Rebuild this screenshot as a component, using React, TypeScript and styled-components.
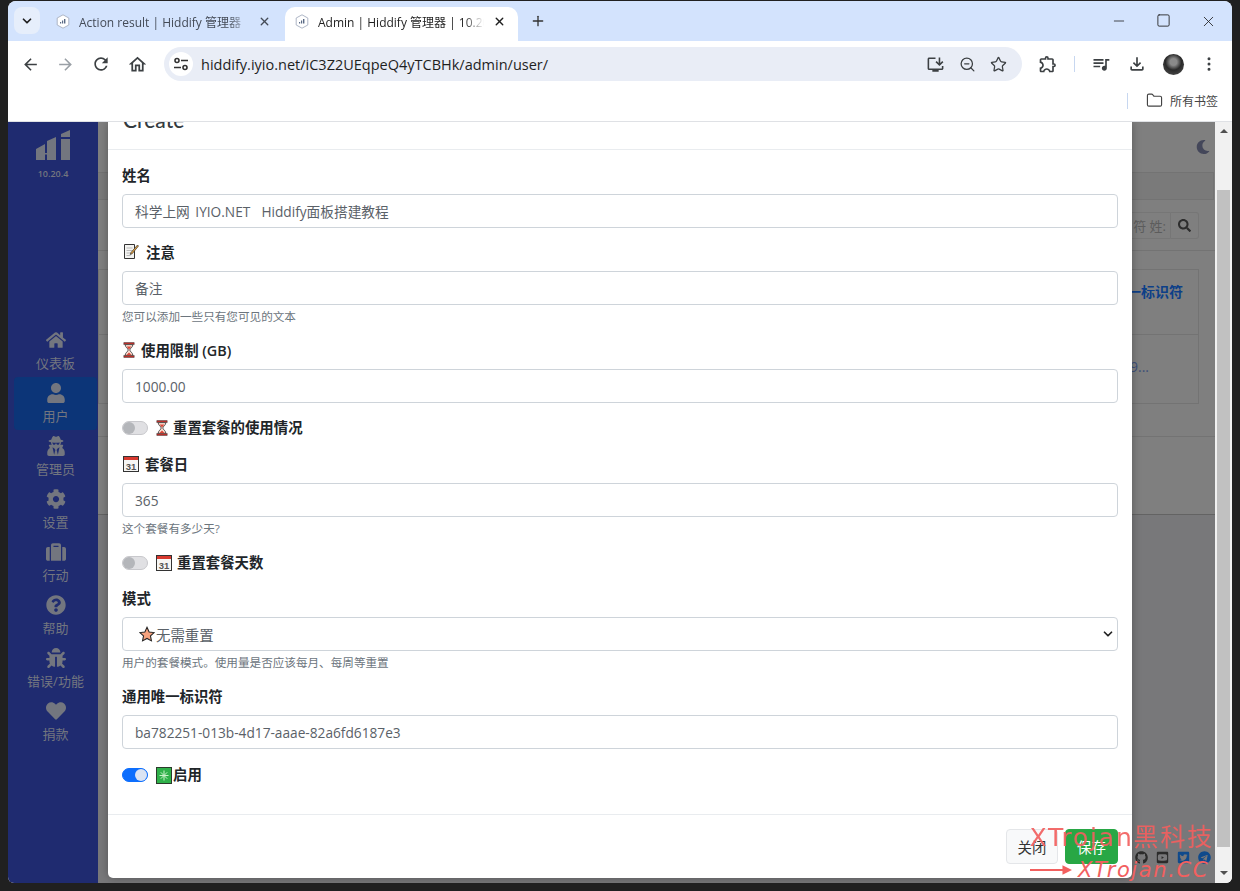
import { createGlobalStyle, styled } from 'styled-components';
import {
  FaBug,
  FaCog,
  FaGithub,
  FaHeart,
  FaHome,
  FaMoon,
  FaQuestionCircle,
  FaSearch,
  FaSuitcase,
  FaTelegram,
  FaTwitterSquare,
  FaUser,
  FaUserSecret,
  FaYoutubeSquare,
} from 'react-icons/fa';
import {
  MdArrowBack,
  MdArrowForward,
  MdOutlineExtension,
  MdOutlineFileDownload,
  MdOutlineHome,
  MdOutlineInstallDesktop,
  MdOutlineQueueMusic,
  MdRefresh,
} from 'react-icons/md';
import { ChevronDown, EllipsisVertical, Folder, Minus, Plus, Square, Star, X, ZoomOut } from 'lucide-react';

const FONT = `"Open Sans", "Noto Sans CJK SC", sans-serif`;

const GlobalStyle = createGlobalStyle`
  html, body {
    margin: 0;
    height: 100%;
    background: #202020;
    font-family: ${FONT};
    overflow: hidden;
  }
  * { box-sizing: border-box; }
`;

const Frame = styled.div`
  height: 891px;
  padding: 1px 8px 8px;
`;

const Window = styled.div`
  position: relative;
  height: 100%;
  display: flex;
  flex-direction: column;
  background: #fff;
  border-radius: 8px 8px 6px 6px;
  overflow: hidden;
`;

const TabStrip = styled.div`
  flex: none;
  height: 40px;
  display: flex;
  align-items: flex-end;
  padding-left: 6px;
  background: #d3e3fd;
`;

const TabMenu = styled.div`
  align-self: flex-start;
  width: 26px;
  height: 27px;
  margin: 6px 6px 0 0;
  display: flex;
  align-items: center;
  justify-content: center;
  background: #e6eefb;
  border-radius: 8px;
  color: #1f1f1f;
`;

const Tab = styled.div<{ $active?: boolean }>`
  width: ${({ $active }) => ($active ? '233px' : '237px')};
  height: 34px;
  margin-right: ${({ $active }) => ($active ? 0 : '2px')};
  display: flex;
  align-items: center;
  gap: 9px;
  padding: 0 12px 5px 10px;
  font-size: 12px;
  white-space: nowrap;
  color: ${({ $active }) => ($active ? '#1f1f1f' : '#444b57')};
  background: ${({ $active }) => ($active ? '#fff' : 'transparent')};
  border-radius: 10px 10px 0 0;
`;

const TabTitle = styled.span`
  flex: 1;
  overflow: hidden;
  mask-image: linear-gradient(to right, #000 88%, transparent);
`;

const NewTab = styled.div`
  align-self: center;
  margin: 0 0 0 12px;
  display: flex;
  color: #333;
`;

const WindowButtons = styled.div`
  margin-left: auto;
  align-self: center;
  display: flex;
  gap: 29px;
  padding-right: 15px;
  color: #222;
`;

const Toolbar = styled.div`
  flex: none;
  height: 46px;
  display: flex;
  align-items: center;
  padding: 0 12px 0 13px;
  color: #3c4043;
`;

const NavButtons = styled.div`
  display: flex;
  align-items: center;
  gap: 16px;
  margin-right: 16px;
`;

const Omnibox = styled.div`
  flex: none;
  width: 858px;
  height: 34px;
  display: flex;
  align-items: center;
  padding: 0 15px 0 5px;
  background: #e9edf6;
  border-radius: 17px;
`;

const SiteBadge = styled.div`
  width: 24px;
  height: 24px;
  display: flex;
  align-items: center;
  justify-content: center;
  margin-right: 8px;
  background: #fff;
  border-radius: 50%;
`;

const Url = styled.span`
  flex: 1;
  font-size: 14.5px;
  color: #1f1f1f;
`;

const OmniIcons = styled.div`
  display: flex;
  align-items: center;
  gap: 14px;
`;

const ToolIcons = styled.div`
  flex: none;
  display: flex;
  align-items: center;
  gap: 16px;
  margin-left: 16px;
`;

const Divider = styled.div`
  width: 1px;
  height: 16px;
  background: #c7d7f0;
`;

const Avatar = styled.div`
  width: 21px;
  height: 21px;
  border-radius: 50%;
  background: radial-gradient(circle at 50% 38%, #8a8a8a 0 20%, #2a2a2a 48%, #555 100%);
`;

const Bookmarks = styled.div`
  flex: none;
  height: 35px;
  display: flex;
  align-items: center;
  justify-content: flex-end;
  gap: 7px;
  padding: 0 14px 7px 0;
  font-size: 12px;
  color: #444;
  border-bottom: 1px solid #dfe1e5;
`;

const BookmarkDivider = styled(Divider)`
  margin-right: 11px;
`;

const Page = styled.div`
  position: relative;
  flex: 1;
  display: flex;
  min-height: 0;
  overflow: hidden;
`;

const Sidebar = styled.aside`
  flex: none;
  width: 90px;
  display: flex;
  flex-direction: column;
  align-items: center;
  padding-top: 8px;
  background: #1f2b70;
  color: #73767f;
`;

const Version = styled.div`
  margin-top: 6px;
  margin-bottom: 144px;
  font-size: 9px;
  font-weight: 600;
`;

const NavList = styled.nav`
  width: 100%;
  padding: 0 1px 0 6px;
`;

const NavItem = styled.div<{ $active?: boolean }>`
  height: 53px;
  display: flex;
  flex-direction: column;
  align-items: center;
  justify-content: center;
  gap: 4px;
  font-size: 13px;
  line-height: 18px;
  border-radius: 4px;
  background: ${({ $active }) => ($active ? '#0c3578' : 'transparent')};
`;

const Main = styled.main`
  flex: 1;
  display: flex;
  flex-direction: column;
  background: #7f7f7f;
  color: #333;
`;

const TopBar = styled.div`
  flex: none;
  height: 50px;
  display: flex;
  align-items: center;
  justify-content: flex-end;
  padding-right: 5px;
  color: #44475a;
`;

const Crumb = styled.div`
  flex: none;
  height: 28px;
  margin-right: 1px;
  background: #7a7a7a;
  border: 1px solid #737373;
  border-left: 0;
`;

const SearchRow = styled.div`
  flex: none;
  height: 51px;
  display: flex;
  align-items: center;
  justify-content: flex-end;
  padding: 0 16px 0 0;
  border-bottom: 1px solid #737373;
`;

const SearchField = styled.div`
  width: 70px;
  height: 27px;
  padding: 0 4px;
  text-align: right;
  font-size: 13px;
  line-height: 27px;
  color: #5c5c5c;
  border: 1px solid #767676;
  border-radius: 3px 0 0 3px;
`;

const SearchButton = styled.div`
  width: 28px;
  height: 27px;
  display: flex;
  align-items: center;
  justify-content: center;
  color: #2d2d2d;
  border: 1px solid #767676;
  border-left: 0;
  border-radius: 0 3px 3px 0;
`;

const TableArea = styled.div`
  flex: none;
  height: 186px;
  padding: 18px 16px 0 0;
  border-bottom: 1px solid #737373;
`;

const TableCell = styled.div<{ $tall?: boolean }>`
  height: ${({ $tall }) => ($tall ? '69px' : '66px')};
  padding: ${({ $tall }) => ($tall ? '22px' : '11px')} 15px 0 0;
  text-align: right;
  font-size: 14px;
  font-weight: ${({ $tall }) => ($tall ? 400 : 600)};
  color: ${({ $tall }) => ($tall ? '#3d4f78' : '#0d3f88')};
  border: 1px solid #737373;
  border-top-width: ${({ $tall }) => ($tall ? 0 : '1px')};
`;

const TallCellText = styled.span`
  display: block;
  margin-right: 34px;
`;

const Band = styled.div`
  flex: none;
  height: 78px;
  border-bottom: 1px solid #636363;
`;

const LowerArea = styled.div`
  flex: 1;
  display: flex;
  align-items: flex-end;
  justify-content: flex-end;
  gap: 8px;
  padding: 0 4px 19px 0;
  background: #78787a;
  color: #2b2b2b;
`;

const BlueIcon = styled.span`
  display: flex;
  color: #0f4a8c;
`;

const ScrollBar = styled.div`
  flex: none;
  width: 17px;
  display: flex;
  flex-direction: column;
  align-items: center;
  background: #f1f1f1;
`;

const ScrollArrow = styled.div<{ $down?: boolean }>`
  flex: none;
  width: 0;
  height: 0;
  margin: ${({ $down }) => ($down ? 'auto 0 8px' : '7px 0 0')};
  border-left: 4px solid transparent;
  border-right: 4px solid transparent;
  border-bottom: ${({ $down }) => ($down ? '0' : '4px solid #505050')};
  border-top: ${({ $down }) => ($down ? '4px solid #505050' : '0')};
`;

const ScrollThumb = styled.div`
  flex: none;
  width: 13px;
  height: 657px;
  margin-top: 57px;
  background: #c1c1c1;
`;

const Modal = styled.section`
  position: absolute;
  top: 0;
  bottom: 5px;
  left: 100px;
  width: 1024px;
  display: flex;
  flex-direction: column;
  background: #fff;
  border-radius: 0 0 5px 5px;
  box-shadow: 0 0 10px rgba(0, 0, 0, 0.3);
`;

const ModalHeader = styled.header`
  flex: none;
  height: 28px;
  display: flex;
  align-items: flex-end;
  padding: 0 15px 17px;
  overflow: hidden;
  border-bottom: 1px solid #e9ecef;
`;

const ModalTitle = styled.h5`
  margin: 0;
  font-family: Lato, sans-serif;
  font-size: 21px;
  font-weight: 500;
  line-height: 24px;
  color: #343a40;
`;

const ModalBody = styled.form`
  flex: 1;
  padding: 16px 14px 0;
`;

const FieldLabel = styled.label`
  height: 20px;
  display: flex;
  align-items: center;
  gap: 6px;
  margin-bottom: 8px;
  padding-bottom: 3px;
  font-size: 14.4px;
  font-weight: 600;
  color: #212529;

  svg {
    margin-left: 1px;
  }
`;

const Input = styled.div`
  height: 34px;
  display: flex;
  align-items: center;
  padding: 0 12px;
  font-size: 13.7px;
  word-spacing: 2px;
  color: #5a6168;
  background: #fff;
  border: 1px solid #ced4da;
  border-radius: 4px;
`;

const SelectBox = styled(Input)`
  padding-right: 2px;
  font-size: 14.4px;
`;

const SelectIconWrap = styled.span`
  display: flex;
  margin: 0 1px 0 4px;
`;

const SelectText = styled.span`
  flex: 1;
`;

const Hint = styled.div`
  margin-top: 4px;
  height: 16px;
  font-size: 11.6px;
  line-height: 16px;
  color: #6c757d;
`;

const Field = styled.div<{ $gap: number }>`
  margin-bottom: ${({ $gap }) => $gap}px;
`;

const SwitchRow = styled.div<{ $gap: number }>`
  height: 20px;
  display: flex;
  align-items: center;
  gap: 8px;
  margin-bottom: ${({ $gap }) => $gap}px;
  font-size: 14.4px;
  font-weight: 600;
  color: #212529;
`;

const SwitchLabel = styled.span<{ $gap?: number }>`
  display: flex;
  align-items: center;
  gap: ${({ $gap }) => $gap ?? 5}px;
  margin-bottom: 3px;

  svg {
    margin-top: 3px;
  }
`;

const Switch = styled.span<{ $on?: boolean }>`
  position: relative;
  flex: none;
  width: 26px;
  height: 14px;
  border-radius: 7px;
  background: ${({ $on }) => ($on ? '#0d6efd' : '#e0e0e3')};
  border: 1px solid ${({ $on }) => ($on ? '#0d6efd' : '#c8c8cc')};

  &::after {
    content: '';
    position: absolute;
    top: 0;
    left: ${({ $on }) => ($on ? '12px' : '0')};
    width: 12px;
    height: 12px;
    border-radius: 50%;
    background: ${({ $on }) => ($on ? '#dbe4f3' : '#b4b6ba')};
  }
`;

const ModalFooter = styled.footer`
  flex: none;
  height: 64px;
  display: flex;
  align-items: flex-start;
  justify-content: flex-end;
  gap: 7px;
  padding: 14px 14px 0;
  border-top: 1px solid #e9ecef;
`;

const Button = styled.button<{ $primary?: boolean }>`
  height: 35px;
  width: ${({ $primary }) => ($primary ? '53px' : '52px')};
  padding: 0;
  font-family: inherit;
  font-size: 14.4px;
  color: ${({ $primary }) => ($primary ? '#fff' : '#333')};
  background: ${({ $primary }) => ($primary ? '#28a745' : '#f8f9fa')};
  border: 1px solid ${({ $primary }) => ($primary ? '#28a745' : '#e4e6e9')};
  border-radius: 4px;
`;

const Watermark = styled.div`
  position: absolute;
  right: 18px;
  bottom: 0;
  display: flex;
  flex-direction: column;
  align-items: flex-end;
  font-family: 'DejaVu Sans', 'Noto Sans CJK SC', sans-serif;
  color: #f2605f;
  pointer-events: none;
`;

const WatermarkTop = styled.div`
  margin-bottom: 4px;
  font-size: 25px;
  line-height: 30px;
  letter-spacing: 1.8px;
  opacity: 0.92;
`;

const WatermarkBottom = styled.div`
  display: flex;
  align-items: center;
  gap: 6px;
  padding-right: 5px;
  font-size: 21px;
  line-height: 26px;
  font-style: italic;
  letter-spacing: 1.6px;
`;

const LogoBars = () => (
  <svg width='36' height='31' viewBox='0 0 36 31' fill='currentColor'>
    <path d='M1 19l9-5v16H1zM12 11l9-4v23h-9zM26 4l9-4v7h-9zM26 9h9v21h-9z' />
    <path d='M10 23h2v1.500h-2z' />
  </svg>
);

const HiddifyTabIcon = () => (
  <svg width='14' height='15' viewBox='0 0 14 15'>
    <path d='M7 .8l5.800 3.200v7L7 14.200 1.200 11V4z' fill='#fff' stroke='#aeb6c6' strokeWidth='1' />
    <path d='M4 9.500h1.200V8H4zM6 9.500h1.200V6.500H6zM8 9.500h1.400V5H8z' fill='#5a6a85' />
  </svg>
);

const TuneIcon = () => (
  <svg width='16' height='14' viewBox='0 0 16 14' fill='none' stroke='#333' strokeWidth='1.600'>
    <circle cx='4' cy='3.500' r='2' />
    <path d='M8 3.500h7M1 10.500h7' />
    <circle cx='12' cy='10.500' r='2' />
  </svg>
);

const MemoIcon = () => (
  <svg width='17' height='17' viewBox='0 0 17 17'>
    <path d='M1.500 1.500h10v14h-10z' fill='#f4f4f2' stroke='#333' strokeWidth='1' />
    <path d='M3.500 5h6M3.500 7.500h6M3.500 10h5M3.500 12.500h4' stroke='#aaa' strokeWidth='0.800' />
    <path d='M14.500 2L8 9.500l-.8 2 2-.8L15.500 3z' fill='#e8a33d' stroke='#333' strokeWidth='0.700' />
  </svg>
);

const HourglassIcon = () => (
  <svg width='12' height='16' viewBox='0 0 12 16'>
    <path d='M.8 .6h10.400v2H.8zM.8 13.400h10.400v2H.8z' fill='#c22f2a' stroke='#333' strokeWidth='0.500' />
    <path
      d='M2.200 2.600h7.600c0 3-3 3.800-3 5.400s3 2.400 3 5.400H2.200c0-3 3-3.800 3-5.400s-3-2.400-3-5.400z'
      fill='#fbdcd0'
      stroke='#333'
      strokeWidth='0.800'
    />
    <path d='M3.600 4.500h4.800L6 7.500zM3.200 13.300L6 10.500l2.800 2.800z' fill='#d9483a' />
  </svg>
);

const CalendarIcon = () => (
  <svg width='16' height='16' viewBox='0 0 16 16'>
    <rect x='.5' y='.5' width='15' height='15' fill='#f6f6f4' stroke='#333' />
    <rect x='1' y='1' width='14' height='3' fill='#d8392f' />
    <text x='8' y='13.500' textAnchor='middle' fontSize='9.500' fontFamily='"Liberation Sans", sans-serif' fill='#555'>
      31
    </text>
  </svg>
);

const StarIcon = () => (
  <svg width='16' height='16' viewBox='0 0 18 17'>
    <path
      d='M9 1l2.400 5.200 5.600.7-4.100 3.800 1.100 5.500L9 13.500 4 16.200l1.100-5.500L1 6.900l5.600-.7z'
      fill='#f6a27e'
      stroke='#222'
      strokeWidth='1.200'
    />
  </svg>
);

const SparkleIcon = () => (
  <svg width='16' height='17' viewBox='0 0 16 17'>
    <rect x='.5' y='.5' width='15' height='16' fill='#2fb14a' stroke='#2b3a2b' />
    <path d='M8 3.500v10M3.500 8.500h9M4.800 5.300l6.400 6.400M11.200 5.300l-6.400 6.400' stroke='#c9f2c9' strokeWidth='1' />
  </svg>
);

const NAV_ITEMS = [
  { label: '仪表板', Icon: FaHome },
  { label: '用户', Icon: FaUser, active: true },
  { label: '管理员', Icon: FaUserSecret },
  { label: '设置', Icon: FaCog },
  { label: '行动', Icon: FaSuitcase },
  { label: '帮助', Icon: FaQuestionCircle },
  { label: '错误/功能', Icon: FaBug },
  { label: '捐款', Icon: FaHeart },
];

const App = () => (
  <>
    <GlobalStyle />
    <Frame>
      <Window>
        <TabStrip>
          <TabMenu>
            <ChevronDown size={14} strokeWidth={3} />
          </TabMenu>
          <Tab>
            <HiddifyTabIcon />
            <TabTitle>Action result | Hiddify 管理器</TabTitle>
            <X size={13} strokeWidth={2.5} />
          </Tab>
          <Tab $active>
            <HiddifyTabIcon />
            <TabTitle>Admin | Hiddify 管理器 | 10.20</TabTitle>
            <X size={13} strokeWidth={2.5} />
          </Tab>
          <NewTab>
            <Plus size={16} strokeWidth={2} />
          </NewTab>
          <WindowButtons>
            <Minus size={16} strokeWidth={1.2} />
            <Square size={15} strokeWidth={1.4} />
            <X size={17} strokeWidth={1.2} />
          </WindowButtons>
        </TabStrip>
        <Toolbar>
          <NavButtons>
            <MdArrowBack size={19} />
            <MdArrowForward size={19} color='#9aa0a6' />
            <MdRefresh size={20} />
            <MdOutlineHome size={21} />
          </NavButtons>
          <Omnibox>
            <SiteBadge>
              <TuneIcon />
            </SiteBadge>
            <Url>hiddify.iyio.net/iC3Z2UEqpeQ4yTCBHk/admin/user/</Url>
            <OmniIcons>
              <MdOutlineInstallDesktop size={19} />
              <ZoomOut size={17} strokeWidth={1.8} />
              <Star size={17} strokeWidth={1.8} />
            </OmniIcons>
          </Omnibox>
          <ToolIcons>
            <MdOutlineExtension size={20} />
            <Divider />
            <MdOutlineQueueMusic size={20} />
            <MdOutlineFileDownload size={20} />
            <Avatar />
            <EllipsisVertical size={18} strokeWidth={2} />
          </ToolIcons>
        </Toolbar>
        <Bookmarks>
          <BookmarkDivider />
          <Folder size={17} strokeWidth={1.6} />
          所有书签
        </Bookmarks>
        <Page>
          <Sidebar>
            <LogoBars />
            <Version>10.20.4</Version>
            <NavList>
              {NAV_ITEMS.map(({ label, Icon, active }) => (
                <NavItem key={label} $active={active}>
                  <Icon size={20} />
                  {label}
                </NavItem>
              ))}
            </NavList>
          </Sidebar>
          <Main>
            <TopBar>
              <FaMoon size={14} />
            </TopBar>
            <Crumb />
            <SearchRow>
              <SearchField>符 姓:</SearchField>
              <SearchButton>
                <FaSearch size={13} />
              </SearchButton>
            </SearchRow>
            <TableArea>
              <TableCell>一标识符</TableCell>
              <TableCell $tall>
                <TallCellText>9...</TallCellText>
              </TableCell>
            </TableArea>
            <Band />
            <LowerArea>
              <FaGithub size={13} />
              <FaYoutubeSquare size={13} />
              <BlueIcon>
                <FaTwitterSquare size={13} />
              </BlueIcon>
              <BlueIcon>
                <FaTelegram size={13} />
              </BlueIcon>
            </LowerArea>
          </Main>
          <ScrollBar>
            <ScrollArrow />
            <ScrollThumb />
            <ScrollArrow $down />
          </ScrollBar>
          <Modal>
            <ModalHeader>
              <ModalTitle>Create</ModalTitle>
            </ModalHeader>
            <ModalBody>
              <Field $gap={15}>
                <FieldLabel>姓名</FieldLabel>
                <Input>科学上网 IYIO.NET&nbsp; Hiddify面板搭建教程</Input>
              </Field>
              <Field $gap={16}>
                <FieldLabel>
                  <MemoIcon /> 注意
                </FieldLabel>
                <Input>备注</Input>
                <Hint>您可以添加一些只有您可见的文本</Hint>
              </Field>
              <Field $gap={15}>
                <FieldLabel>
                  <HourglassIcon /> 使用限制 (GB)
                </FieldLabel>
                <Input>1000.00</Input>
              </Field>
              <SwitchRow $gap={17}>
                <Switch />
                <SwitchLabel>
                  <HourglassIcon /> 重置套餐的使用情况
                </SwitchLabel>
              </SwitchRow>
              <Field $gap={16}>
                <FieldLabel>
                  <CalendarIcon /> 套餐日
                </FieldLabel>
                <Input>365</Input>
                <Hint>这个套餐有多少天?</Hint>
              </Field>
              <SwitchRow $gap={16}>
                <Switch />
                <SwitchLabel>
                  <CalendarIcon /> 重置套餐天数
                </SwitchLabel>
              </SwitchRow>
              <Field $gap={16}>
                <FieldLabel>模式</FieldLabel>
                <SelectBox>
                  <SelectIconWrap>
                    <StarIcon />
                  </SelectIconWrap>
                  <SelectText>无需重置</SelectText>
                  <ChevronDown size={14} strokeWidth={3} color='#222' />
                </SelectBox>
                <Hint>用户的套餐模式。使用量是否应该每月、每周等重置</Hint>
              </Field>
              <Field $gap={16}>
                <FieldLabel>通用唯一标识符</FieldLabel>
                <Input>ba782251-013b-4d17-aaae-82a6fd6187e3</Input>
              </Field>
              <SwitchRow $gap={0}>
                <Switch $on />
                <SwitchLabel $gap={1}>
                  <SparkleIcon />
                  启用
                </SwitchLabel>
              </SwitchRow>
            </ModalBody>
            <ModalFooter>
              <Button>关闭</Button>
              <Button $primary>保存</Button>
            </ModalFooter>
          </Modal>
        </Page>
        <Watermark>
          <WatermarkTop>XTrojan黑科技</WatermarkTop>
          <WatermarkBottom>
            <svg width='42' height='14' viewBox='0 0 44 14' fill='#f2605f'>
              <path d='M0 6h34V2l10 5-10 5V8H0z' />
            </svg>
            XTrojan.CC
          </WatermarkBottom>
        </Watermark>
      </Window>
    </Frame>
  </>
);

export default App;
